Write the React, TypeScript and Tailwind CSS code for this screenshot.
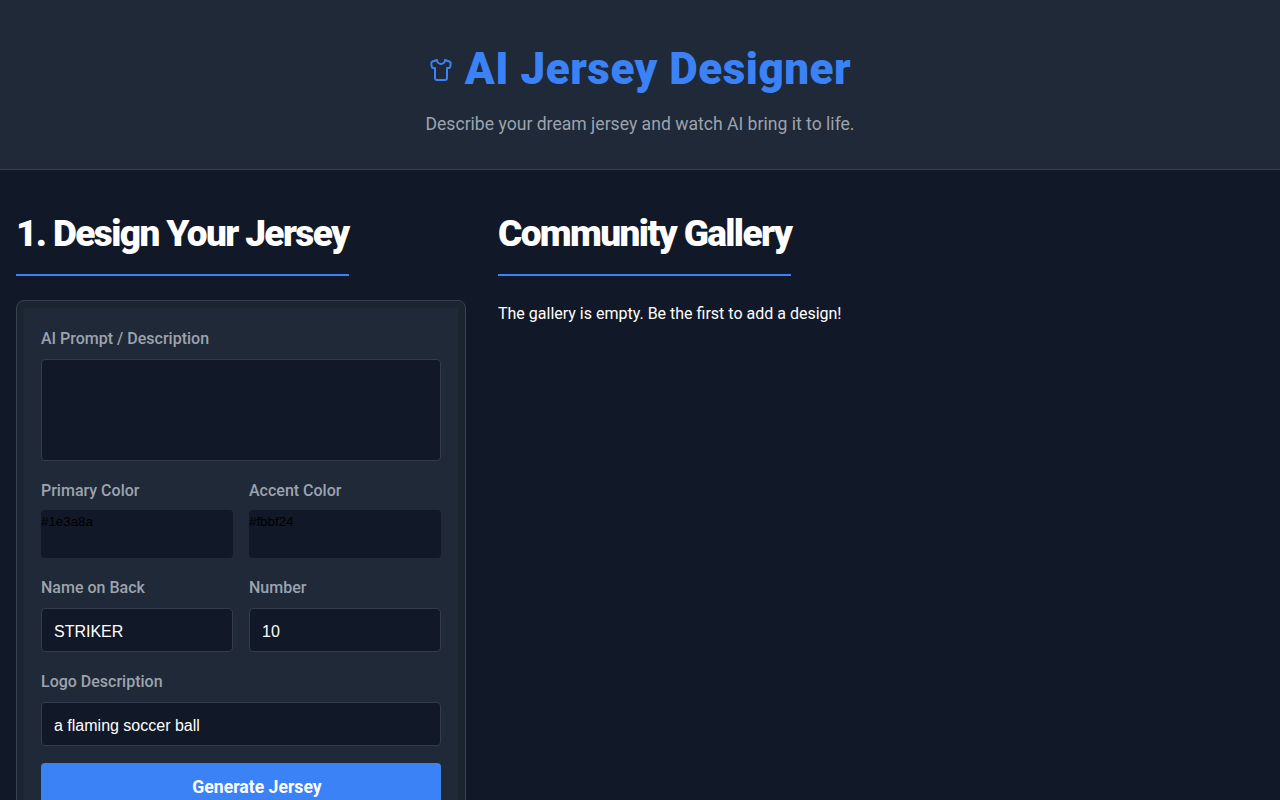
import React from 'react';

const inputClass =
  "w-full h-11 pt-1 bg-[#111827] border border-[#323c4c] rounded px-3 text-white text-base font-['Liberation_Sans',sans-serif] outline-none";
const labelClass = 'block text-[#9ca3af] text-base font-medium leading-6';

const ShirtIcon = () => (
  <svg className="mt-0.5" width="24" height="24" viewBox="0 0 24 24" fill="none" stroke="#3b82f6" strokeWidth="2" strokeLinecap="round" strokeLinejoin="round">
    <path d="M20.38 3.46 16 2a4 4 0 0 1-8 0L3.62 3.46a2 2 0 0 0-1.34 2.23l.58 3.47a1 1 0 0 0 .99.84H6v10c0 1.1.9 2 2 2h8a2 2 0 0 0 2-2V10h2.15a1 1 0 0 0 .99-.84l.58-3.47a2 2 0 0 0-1.34-2.23z" />
  </svg>
);

const ColorField = ({ label, value }: { label: string; value: string }) => (
  <div>
    <label className={labelClass + ' mb-[7px]'}>{label}</label>
    <div className="h-12 bg-[#111827] rounded text-black text-[13.33px] leading-6 font-['Liberation_Sans',sans-serif]">
      {value}
    </div>
  </div>
);

const SectionTitle = ({ children }: { children: React.ReactNode }) => (
  <h2 className="inline-block text-white text-[37px] leading-[57px] font-black tracking-[-1.62px] pb-3 border-b-2 border-[#3b82f6] mb-6">
    {children}
  </h2>
);

const App: React.FC = () => {
  return (
    <div className="h-[800px] overflow-hidden bg-[#111827] font-['Roboto',sans-serif]">
      <header className="h-[170px] bg-[#1f2937] border-b border-[#374151] flex flex-col items-center pt-10">
        <h1 className="flex items-center gap-3 text-[#3b82f6] text-[44px] leading-[58px] font-black tracking-[0.5px]">
          <ShirtIcon />
          AI Jersey Designer
        </h1>
        <p className="mt-3 text-[#9ca3af] text-[17.6px] leading-7">Describe your dream jersey and watch AI bring it to life.</p>
      </header>

      <main className="grid grid-cols-[450px_1fr] gap-8 px-4 pt-[35px]">
        <section>
          <SectionTitle>1. Design Your Jersey</SectionTitle>
          <div className="border border-[#374151] rounded-lg bg-[#1b2530] p-[7px]">
            <div className="bg-[#1f2937] p-[17px] pt-[19px] flex flex-col gap-[18px]">
              <div>
                <label className={labelClass + ' mb-2'}>AI Prompt / Description</label>
                <textarea className="w-full h-[102px] block bg-[#111827] border border-[#323c4c] rounded resize-none outline-none" />
              </div>
              <div className="grid grid-cols-2 gap-4">
                <ColorField label="Primary Color" value="#1e3a8a" />
                <ColorField label="Accent Color" value="#fbbf24" />
              </div>
              <div className="grid grid-cols-2 gap-4">
                <div>
                  <label className={labelClass + ' mb-2'}>Name on Back</label>
                  <input className={inputClass} defaultValue="STRIKER" />
                </div>
                <div>
                  <label className={labelClass + ' mb-2'}>Number</label>
                  <input className={inputClass} defaultValue="10" />
                </div>
              </div>
              <div>
                <label className={labelClass + ' mb-2'}>Logo Description</label>
                <input className={inputClass} defaultValue="a flaming soccer ball" />
              </div>
              <button className="w-full h-12 -mt-px pl-8 bg-[#3b82f6] text-white rounded text-[17.6px] font-bold">Generate Jersey</button>
            </div>
          </div>
        </section>

        <section>
          <SectionTitle>Community Gallery</SectionTitle>
          <p className="text-white text-base leading-6 mt-[2px]">The gallery is empty. Be the first to add a design!</p>
        </section>
      </main>
    </div>
  );
};

export default App;
